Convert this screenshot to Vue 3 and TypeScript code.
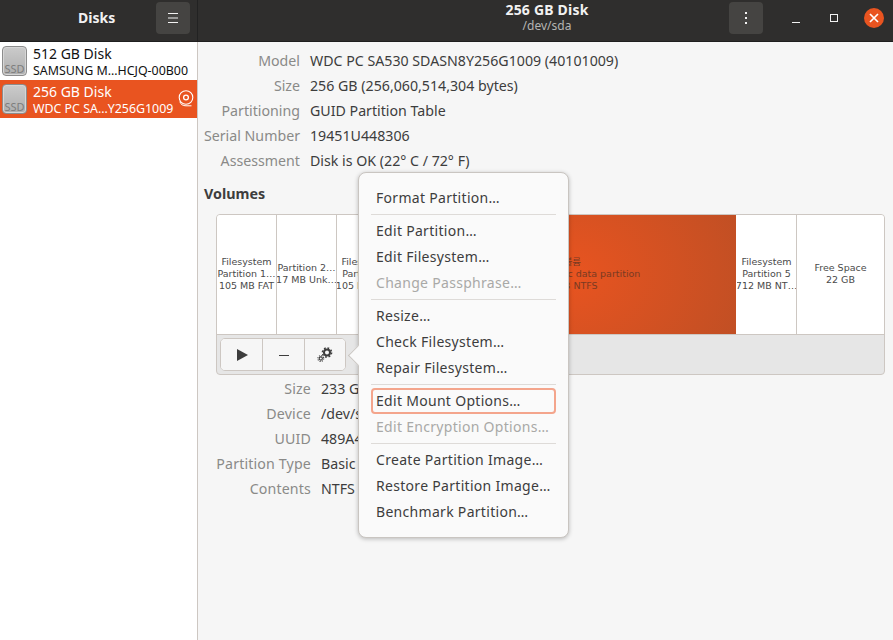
<template>
	<div class="window">
		<header class="titlebar">
			<div class="titlebar-left">
				<span class="app-title">Disks</span>
				<button class="header-btn menu-btn" aria-label="Menu">
					<svg width="16" height="16" viewBox="0 0 16 16"><path d="M3 3.500h10M3 8h10M3 12.500h10" stroke="#f2f2f2" stroke-width="1" fill="none" /></svg>
				</button>
			</div>
			<div class="titlebar-main">
				<div class="title-block">
					<div class="title">256 GB Disk</div>
					<div class="subtitle">/dev/sda</div>
				</div>
				<button class="header-btn dots-btn" aria-label="More">
					<svg width="16" height="16" viewBox="0 0 16 16"><path d="M7 2h2v2H7zM7 7h2v2H7zM7 12h2v2H7z" fill="#f2f2f2" /></svg>
				</button>
				<div class="win-controls">
					<svg width="16" height="16" viewBox="0 0 16 16"><path d="M0 12.500h8" transform="translate(4 0)" stroke="#f2f2f2" stroke-width="1" /></svg>
					<svg width="16" height="16" viewBox="0 0 16 16"><rect x="4.500" y="4.500" width="7" height="7" fill="none" stroke="#f2f2f2" stroke-width="1" /></svg>
					<span class="close-circle">
						<svg width="10" height="10" viewBox="0 0 10 10"><path d="M1 1l8 8M9 1l-8 8" stroke="#fff" stroke-width="1.700" /></svg>
					</span>
				</div>
			</div>
		</header>

		<div class="content">
			<aside class="sidebar">
				<div v-for="d in disks" :key="d.name" class="disk-row" :class="{ selected: d.selected }">
					<div class="ssd-icon"><span>SSD</span></div>
					<div class="disk-text">
						<div class="disk-name">{{ d.name }}</div>
						<div class="disk-model">{{ d.model }}</div>
					</div>
					<svg v-if="d.selected" class="media-icon" width="16" height="17" viewBox="0 0 16 17" fill="none" stroke="#fff">
						<circle cx="8" cy="7.500" r="6.800" stroke-width="1.100" />
						<circle cx="8" cy="7.500" r="2.400" stroke-width="1.300" />
						<path d="M1.800 11.500C2.500 14.500 5 15.800 8 15.800H13.500" stroke-width="1" />
					</svg>
				</div>
			</aside>

			<main class="main">
				<dl class="details top-details">
					<template v-for="r in driveRows" :key="r[0]">
						<dt>{{ r[0] }}</dt>
						<dd>{{ r[1] }}</dd>
					</template>
				</dl>

				<h2 class="volumes-title">Volumes</h2>

				<div class="volumes">
					<div class="segments">
						<div
							v-for="s in segments"
							:key="s.id"
							class="segment"
							:class="{ active: s.active }"
							:style="{ width: s.width + 'px' }"
						>
							<div v-for="line in s.lines" :key="line" class="segment-line">{{ line }}</div>
						</div>
					</div>
					<div class="vol-toolbar">
						<div class="btn-group">
							<button class="tool-btn" aria-label="Mount">
								<svg width="16" height="16" viewBox="0 0 16 16"><path d="M3 2v12l11-6z" fill="#3d3d3d" /></svg>
							</button>
							<button class="tool-btn" aria-label="Remove">
								<svg width="16" height="16" viewBox="0 0 16 16"><path d="M3 8.500h10" stroke="#3d3d3d" stroke-width="1" /></svg>
							</button>
							<button class="tool-btn" aria-label="Options">
								<svg width="16" height="16" viewBox="0 0 16 16" fill="none" stroke="#3d3d3d">
									<circle cx="10" cy="5.500" r="3" stroke-width="2" />
									<circle cx="10" cy="5.500" r="4.600" stroke-width="1.500" stroke-dasharray="1.800 1.800" />
									<circle cx="3.800" cy="11.500" r="1.600" stroke-width="1.100" />
									<circle cx="3.800" cy="11.500" r="2.900" stroke-width="1.100" stroke-dasharray="1.100 1.200" />
								</svg>
							</button>
						</div>
					</div>
				</div>

				<dl class="details bottom-details">
					<template v-for="r in volumeRows" :key="r[0]">
						<dt>{{ r[0] }}</dt>
						<dd>{{ r[1] }}</dd>
					</template>
				</dl>
			</main>
		</div>

		<!-- popover menu over the partition toolbar -->
		<div class="popover">
			<span class="popover-arrow"></span>
			<template v-for="(group, i) in menu" :key="i">
				<hr v-if="i > 0" class="menu-sep" />
				<div
					v-for="item in group"
					:key="item.label"
					class="menu-item"
					:class="{ disabled: item.disabled, focused: item.focused }"
				>
					{{ item.label }}
				</div>
			</template>
		</div>
	</div>
</template>

<script setup lang="ts">
	interface Segment {
		id: number
		width: number
		lines: string[]
		active?: boolean
	}

	interface MenuItem {
		label: string
		disabled?: boolean
		focused?: boolean
	}

	const disks = [
		{ name: '512 GB Disk', model: 'SAMSUNG M…HCJQ-00B00', selected: false },
		{ name: '256 GB Disk', model: 'WDC PC SA…Y256G1009', selected: true },
	]

	const driveRows = [
		['Model', 'WDC PC SA530 SDASN8Y256G1009 (40101009)'],
		['Size', '256 GB (256,060,514,304 bytes)'],
		['Partitioning', 'GUID Partition Table'],
		['Serial Number', '19451U448306'],
		['Assessment', 'Disk is OK (22° C / 72° F)'],
	]

	const volumeRows = [
		['Size', '233 GB'],
		['Device', '/dev/sda4'],
		['UUID', '489A4F2C9A4F1744'],
		['Partition Type', 'Basic data'],
		['Contents', 'NTFS'],
	]

	const segments: Segment[] = [
		{ id: 1, width: 60, lines: ['Filesystem', 'Partition 1…', '105 MB FAT'] },
		{ id: 2, width: 60, lines: ['Partition 2…', '17 MB Unk…'] },
		{ id: 3, width: 60, lines: ['Filesystem', 'Partition 3', '105 MB NT…'] },
		{ id: 4, width: 340, active: true, lines: ['새 볼륨', 'Partition 4: Basic data partition', '233 GB NTFS'] },
		{ id: 5, width: 60, lines: ['Filesystem', 'Partition 5', '712 MB NT…'] },
		{ id: 6, width: 88, lines: ['Free Space', '22 GB'] },
	]

	const menu: MenuItem[][] = [
		[{ label: 'Format Partition…' }],
		[
			{ label: 'Edit Partition…' },
			{ label: 'Edit Filesystem…' },
			{ label: 'Change Passphrase…', disabled: true },
		],
		[{ label: 'Resize…' }, { label: 'Check Filesystem…' }, { label: 'Repair Filesystem…' }],
		[
			{ label: 'Edit Mount Options…', focused: true },
			{ label: 'Edit Encryption Options…', disabled: true },
		],
		[
			{ label: 'Create Partition Image…' },
			{ label: 'Restore Partition Image…' },
			{ label: 'Benchmark Partition…' },
		],
	]
</script>

<style scoped>
	.window {
		position: relative;
		width: 893px;
		height: 640px;
		display: flex;
		flex-direction: column;
		overflow: hidden;
		background: #f6f6f6;
		color: #3d3d3d;
		font-family: 'Noto Sans', 'Noto Sans CJK KR', sans-serif;
		font-size: 14px;
	}

	.titlebar {
		height: 42px;
		flex-shrink: 0;
		display: flex;
		background: #2f2e2d;
		border-bottom: 1px solid #1f1f1f;
		box-sizing: border-box;
		color: #f2f2f2;
	}
	.titlebar-left {
		width: 198px;
		box-sizing: border-box;
		flex-shrink: 0;
		display: flex;
		align-items: center;
		border-right: 1px solid #222;
		padding: 0 0 6px 78px;
	}
	.app-title {
		font-weight: 700;
		font-size: 14px;
		width: 78px;
	}
	.titlebar-main {
		flex: 1;
		position: relative;
		display: flex;
		align-items: center;
		justify-content: flex-end;
		padding-bottom: 6px;
	}
	.title-block {
		position: absolute;
		left: 3px;
		right: 0;
		top: 1px;
		text-align: center;
	}
	.title {
		font-weight: 700;
		font-size: 14px;
		letter-spacing: 0.2px;
		line-height: 18px;
	}
	.subtitle {
		font-size: 12px;
		line-height: 14px;
		color: #b5b5b3;
	}
	.header-btn {
		width: 34px;
		height: 32px;
		padding: 0;
		display: flex;
		align-items: center;
		justify-content: center;
		background: #454442;
		border: none;
		border-radius: 4px;
	}
	.dots-btn {
		margin-right: 25px;
	}
	.win-controls {
		display: flex;
		align-items: center;
		padding-right: 9px;
	}
	.win-controls svg {
		flex-shrink: 0;
	}
	.win-controls > svg:first-child {
		margin-right: 22px;
	}
	.win-controls > svg:nth-child(2) {
		margin-right: 22px;
	}
	.close-circle {
		width: 20px;
		height: 20px;
		border-radius: 50%;
		background: #e95420;
		display: flex;
		align-items: center;
		justify-content: center;
	}

	.content {
		flex: 1;
		display: flex;
		min-height: 0;
	}
	.sidebar {
		width: 198px;
		flex-shrink: 0;
		box-sizing: border-box;
		background: #fff;
		border-right: 1px solid #cdc7c2;
	}
	.disk-row {
		height: 38px;
		display: flex;
		align-items: center;
		padding-left: 2px;
		color: #111;
		position: relative;
	}
	.disk-row.selected {
		background: #e95420;
		color: #fff;
	}
	.ssd-icon {
		width: 25px;
		height: 30px;
		box-sizing: border-box;
		flex-shrink: 0;
		border: 1px solid #8c8c8c;
		border-radius: 4px;
		background: linear-gradient(#cbcbcb, #aeaeae);
		box-shadow: inset 0 0 0 1px #d6d6d6;
		display: flex;
		align-items: flex-end;
		justify-content: center;
		font-size: 11px;
		line-height: 13px;
		color: #7d7d7d;
	}
	.disk-text {
		margin-left: 6px;
		min-width: 0;
		white-space: nowrap;
	}
	.disk-name {
		font-size: 14px;
		line-height: 19px;
	}
	.disk-model {
		font-size: 12.400px;
		line-height: 15px;
	}
	.media-icon {
		position: absolute;
		left: 178px;
		top: 10px;
	}

	.main {
		flex: 1;
		min-width: 0;
		padding-top: 6px;
		box-sizing: border-box;
	}
	.details {
		margin: 0;
		display: grid;
		grid-auto-rows: 25px;
		column-gap: 10px;
		align-items: center;
		font-size: 14.200px;
	}
	.details dt {
		text-align: right;
		color: #8a8a88;
		white-space: nowrap;
	}
	.details dd {
		margin: 0;
		white-space: nowrap;
		color: #3d3d3d;
	}
	.top-details {
		grid-template-columns: 102px 1fr;
	}
	.bottom-details {
		grid-template-columns: 113px 1fr;
		margin-top: 1px;
	}
	.bottom-details dt {
		letter-spacing: 0.15px;
	}
	.volumes-title {
		margin: 11px 0 0 6px;
		font-size: 14.300px;
		line-height: 20px;
		font-weight: 700;
		color: #3d3d3d;
	}
	.volumes {
		margin: 10px 8px 0 18px;
		border: 1px solid #cdc7c2;
		border-radius: 4px;
		overflow: hidden;
		height: 161px;
		box-sizing: border-box;
		background: #e6e6e6;
		display: flex;
		flex-direction: column;
	}
	.segments {
		height: 119px;
		flex-shrink: 0;
		display: flex;
		background: #fff;
		border-bottom: 1px solid #cdc7c2;
		box-sizing: content-box;
	}
	.segment {
		box-sizing: border-box;
		flex-shrink: 0;
		padding-bottom: 2px;
		border-right: 1px solid #cdc7c2;
		display: flex;
		flex-direction: column;
		align-items: center;
		justify-content: center;
		font-family: 'DejaVu Sans', 'Noto Sans CJK KR', sans-serif;
		font-size: 9.500px;
		line-height: 12px;
		color: #4a4a4a;
		white-space: nowrap;
		overflow: hidden;
	}
	.segment:last-child {
		border-right: none;
		flex: 1;
	}
	.segment.active {
		background: radial-gradient(ellipse 190px 150px at center, #e95420 0%, #c04f24 100%);
		color: #7a3a22;
		border-right-color: #fff;
	}
	.vol-toolbar {
		flex: 1;
		padding: 3px;
		display: flex;
		align-items: flex-start;
	}
	.btn-group {
		display: flex;
		height: 33px;
		box-sizing: border-box;
		border: 1px solid #cdc7c2;
		border-radius: 5px;
		background: #f6f6f6;
		overflow: hidden;
	}
	.tool-btn {
		width: 42px;
		padding: 0;
		display: flex;
		align-items: center;
		justify-content: center;
		background: #f6f6f6;
		border: none;
		border-right: 1px solid #cdc7c2;
	}
	.tool-btn:last-child {
		width: 40px;
		border-right: none;
	}

	.popover {
		position: absolute;
		left: 358px;
		top: 172px;
		width: 211px;
		height: 366px;
		box-sizing: border-box;
		padding: 12px 12px;
		background: #fafafa;
		border: 1px solid #c9c5c1;
		border-radius: 8px;
		box-shadow: 0 1px 4px rgba(0, 0, 0, 0.25);
	}
	.popover-arrow {
		position: absolute;
		left: -8px;
		top: 175px;
		width: 14px;
		height: 14px;
		background: #fafafa;
		border-left: 1px solid #c9c5c1;
		border-bottom: 1px solid #c9c5c1;
		transform: rotate(45deg);
	}
	.menu-item {
		position: relative;
		height: 26px;
		line-height: 26px;
		padding-left: 5px;
		white-space: nowrap;
		letter-spacing: 0.3px;
		color: #3d3d3d;
	}
	.menu-item.disabled {
		color: #a9a9a7;
	}
	.menu-item.focused::after {
		content: '';
		position: absolute;
		left: 0;
		right: 0;
		top: 0;
		bottom: 0;
		border: 2px solid #f4a58c;
		border-radius: 4px;
	}
	.menu-sep {
		margin: 3px 0;
		height: 1px;
		border: none;
		background: #dedbd8;
	}
</style>

<style>
	body {
		margin: 0;
	}
</style>
